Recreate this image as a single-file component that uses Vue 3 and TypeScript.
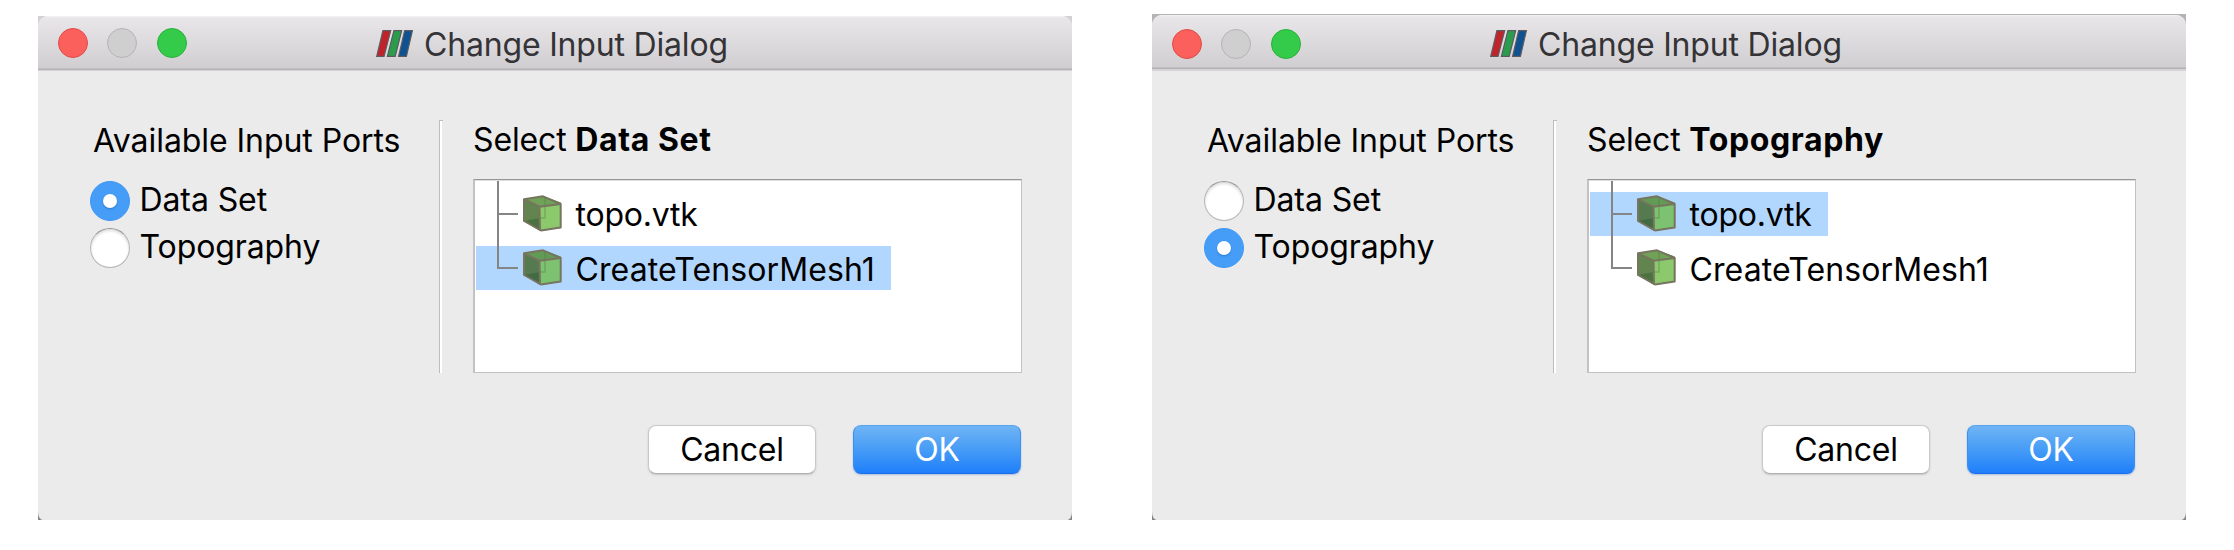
<script setup lang="ts">
interface Port {
  name: string
  cls: string
}

interface Dialog {
  id: string
  cls: string
  port: string
  source: string
}

const ports: Port[] = [
  { name: 'Data Set', cls: 'port-data' },
  { name: 'Topography', cls: 'port-topo' },
]

const sources = [
  { name: 'topo.vtk', cls: 'src-topo' },
  { name: 'CreateTensorMesh1', cls: 'src-mesh' },
]

const dialogs: Dialog[] = [
  { id: 'a', cls: 'first', port: 'Data Set', source: 'CreateTensorMesh1' },
  { id: 'b', cls: 'second', port: 'Topography', source: 'topo.vtk' },
]
</script>

<template>
  <main class="stage">
    <section v-for="d in dialogs" :key="d.id" class="backdrop" :class="d.cls">
      <div class="window">
        <header class="titlebar">
          <div class="lights">
            <i class="light close"></i>
            <i class="light minimize"></i>
            <i class="light expand"></i>
          </div>
          <svg class="logo" width="38" height="28" viewBox="0 0 38 28">
            <g stroke="#5d5b60" stroke-width="1.2">
              <path d="M6.9.7h7.8L8 26.4H.7z" fill="#c1232b" />
              <path d="M17.9.7h7.8l-6.5 25.7h-7.8z" fill="#2a9d4c" />
              <path d="M28.6.7h7.8l-6 25.7h-7.8z" fill="#0e5291" />
            </g>
          </svg>
          <h1 class="title">Change Input Dialog</h1>
        </header>

        <div class="content">
          <div class="ports">
            <h2 class="heading">Available Input Ports</h2>
            <div v-for="p in ports" :key="p.name" class="option">
              <span class="radio" :class="{ on: p.name === d.port }"></span>
              <span class="label" :class="p.cls">{{ p.name }}</span>
            </div>
          </div>
          <div class="divider"></div>
          <div class="picker">
            <p class="prompt">Select <b>{{ d.port }}</b></p>
            <div class="list">
              <div v-for="s in sources" :key="s.name" class="row">
                <div class="item" :class="{ selected: s.name === d.source }">
                  <span class="branch"></span>
                  <svg class="cube" width="39" height="37" viewBox="0 0 39 37">
                    <path d="M1 4.2 20 .9 38 7.7V32.5L18 35.9 1 26z" fill="#6ca052" />
                    <path class="top" d="M1 4.2 20 .9 38 7.7 17.5 11.7z" />
                    <path class="side" d="M1 4.2 16.5 11.7 17 35.9 1 26z" />
                    <path class="shade" d="M1 26 16.5 23v12.5z" />
                    <path class="front" d="M16.5 11.7 38 8.7V32.5L17 35.5z" />
                    <path d="M22 2v21h-5.500" fill="none" stroke="#557c43" stroke-width="1.5" opacity=".4" />
                    <path d="M1 4.2 20 1.3 37.700 9V32.5L18 35.500 1 26zM1 4.2 16.5 11.7 37.700 9M16.5 11.7 17 35.500" fill="none" stroke="#77745f" stroke-width="2" stroke-linejoin="round" />
                  </svg>
                  <span class="name" :class="s.cls">{{ s.name }}</span>
                </div>
              </div>
            </div>
          </div>
        </div>

        <footer class="actions">
          <button class="btn cancel">Cancel</button>
          <button class="btn ok">OK</button>
        </footer>
      </div>
    </section>
  </main>
</template>

<style>
body {
  background: #fff;
}
</style>

<style scoped>
.stage {
  box-sizing: border-box;
  display: flex;
  align-items: flex-end;
  gap: 80px;
  width: 2234px;
  height: 520px;
  padding-left: 38px;
  font: 400 32px/40px Inter, "Liberation Sans", sans-serif;
  color: #000;
}

.backdrop {
  width: 1034px;
  overflow: hidden;
  background: linear-gradient(#d2d1d2 0 60px, #858585 60px);
}

.second {
  box-sizing: border-box;
  padding-top: 1px;
  background: linear-gradient(#b5b4b5 0 60px, #858585 60px);
}

.window {
  overflow: hidden;
  border-radius: 10px 10px 5px 5px / 10px 10px 8px 8px;
  background: #ebebeb;
}

.first .window {
  height: 504px;
}

.second .window {
  height: 505px;
}

.titlebar {
  box-sizing: border-box;
  display: flex;
  align-items: flex-start;
  height: 55px;
  padding-left: 19.5px;
  background: linear-gradient(#f5f3f5 0, #e8e6e9 2px, #d1ced2 52px, #b3b1b4 53px, #b3b1b4 54px, #d5d4d5 54px);
}

.second .titlebar {
  height: 56px;
  padding-top: 1px;
}

.lights {
  display: flex;
  gap: 19.5px;
  width: 318.5px;
  padding-top: 12px;
}

.second .lights {
  padding-top: 13px;
}

.light {
  box-sizing: border-box;
  width: 30px;
  height: 30px;
  border: 1.5px solid;
  border-radius: 50%;
}

.close {
  border-color: #e24a46;
  background: #fc605c;
}

.minimize {
  border-color: #b5b3b5;
  background: #d0cfd0;
}

.expand {
  border-color: #28b03b;
  background: #34cb4a;
}

.logo {
  margin-top: 14px;
}

.title {
  margin: 9px 0 0 10px;
  font-size: 32px;
  font-weight: 400;
  letter-spacing: -0.18px;
  color: #343336;
}

.content {
  display: flex;
  height: 253px;
  padding-top: 49px;
}

.ports {
  width: 349px;
  padding-left: 52px;
}

.heading {
  margin: 1px 0 20px 3px;
  font-size: 32px;
  font-weight: 400;
  letter-spacing: -0.06px;
}

.option {
  display: flex;
  gap: 9.5px;
  height: 40px;
  margin-bottom: 7px;
}

.radio {
  box-sizing: border-box;
  display: grid;
  place-items: center;
  width: 40px;
  height: 40px;
  border: 1px solid #b7b7b7;
  border-top-color: #949494;
  border-radius: 50%;
  background: #fff;
  box-shadow: inset 0 2px 3px #ddd;
}

.radio.on {
  border-color: #4098f4;
  background: #469df7;
  box-shadow: none;
}

.radio.on::after {
  content: "";
  width: 14px;
  height: 14px;
  border-radius: 50%;
  background: #fff;
  box-shadow: 0 1px 2px #2978cb;
}

.label {
  margin-top: -1px;
}

.port-data {
  letter-spacing: -0.1px;
}

.port-topo {
  letter-spacing: -0.1px;
}

.divider {
  box-sizing: border-box;
  width: 4px;
  border: solid #bcbcbc;
  border-width: 1px 0 0 1px;
  background: linear-gradient(90deg, #fff 2px, #ebebeb 2px);
}

.picker {
  padding-left: 30px;
}

.prompt {
  margin: 0 0 19px;
  letter-spacing: -0.15px;
}

.prompt b {
  font-weight: 700;
  letter-spacing: 0.6px;
}

.list {
  box-sizing: border-box;
  width: 548.5px;
  height: 194px;
  padding: 6px 0 0 1px;
  border: 2px solid #c2c2c2;
  border-top: 1px solid #979797;
  border-right-width: 1px;
  border-bottom-width: 1px;
  background: #fff;
  box-shadow: inset 0 1px #dedede;
}

.row {
  position: relative;
  display: flex;
  height: 54.4px;
  padding-top: 6px;
  box-sizing: border-box;
}

.item {
  display: flex;
  height: 44px;
  padding-right: 16.5px;
}

.item.selected {
  background: #b2d7ff;
}

.branch {
  width: 47px;
}

.branch::before,
.branch::after {
  content: "";
  position: absolute;
  left: 21px;
  background: #858585;
}

.branch::before {
  top: -5px;
  width: 2px;
  height: 34px;
}

.row:last-child .branch::before {
  top: -26px;
  height: 55px;
}

.branch::after {
  top: 27px;
  width: 21px;
  height: 2px;
}

.cube {
  margin-top: 3px;
}

.cube .top {
  fill: #6fa256;
}

.cube .side {
  fill: #62844f;
}

.cube .shade {
  fill: #4b7340;
}

.cube .front {
  fill: #8bc96c;
}

.selected .top {
  fill: #629b56;
}

.selected .side {
  fill: #557a50;
}

.selected .shade {
  fill: #426a43;
}

.selected .front {
  fill: #7dc270;
}

.name {
  margin: 3px 0 0 13.5px;
}

.src-topo {
  letter-spacing: -0.2px;
}

.src-mesh {
  margin-top: 3.500px;
  letter-spacing: 0.1px;
}

.actions {
  display: flex;
  justify-content: flex-end;
  gap: 37px;
  padding: 52px 51px 0 0;
}

.btn {
  box-sizing: border-box;
  width: 168px;
  height: 49px;
  padding: 1px 0 0;
  border: 1px solid #c9c9c9;
  border-bottom-color: #b0b0b0;
  border-radius: 8px;
  background: #fff;
  box-shadow: 0 1px 2px #c4c4c4;
  font: inherit;
  letter-spacing: -0.2px;
  color: #000;
}

.ok {
  border-color: #5ba5ee #3c8ff2 #1f6df0;
  background: linear-gradient(#70b4f5, #469cf6 50%, #1f7ffa);
  box-shadow: 0 1px 2px #adbcd8;
  color: #fff;
}
</style>
